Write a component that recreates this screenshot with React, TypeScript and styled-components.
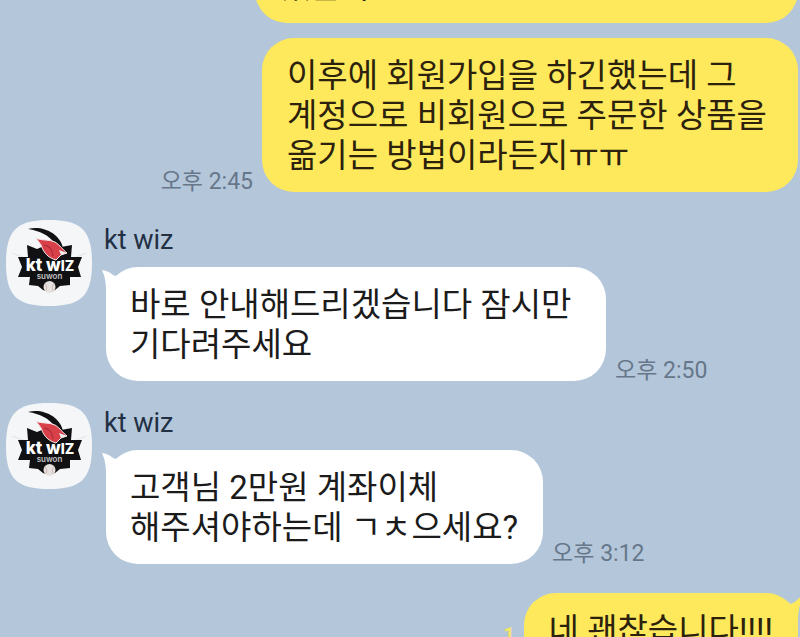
import React from "react";
import styled, { createGlobalStyle } from "styled-components";

const GlobalStyle = createGlobalStyle`
  * { box-sizing: border-box; }
  body { margin: 0; background: #b4c6da; overflow: hidden; }
`;

const Chat = styled.main`
  height: 100vh;
  overflow: hidden;
  background: #b4c6da;
  font-family: Roboto, "Noto Sans CJK KR", sans-serif;
`;

const History = styled.div`
  display: flex;
  flex-direction: column;
  margin-top: -51px;
`;

const Row = styled.div<{ $mine?: boolean; $gap?: number }>`
  display: flex;
  justify-content: ${(p) => (p.$mine ? "flex-end" : "flex-start")};
  align-items: ${(p) => (p.$mine ? "flex-end" : "flex-start")};
  margin-top: ${(p) => p.$gap ?? 0}px;
  padding: ${(p) => (p.$mine ? "0 2px 0 0" : "0 0 0 6px")};
`;

const Bubble = styled.p<{ $mine?: boolean; $wide?: boolean }>`
  position: relative;
  margin: 0;
  padding: 18px 25px 16px ${(p) => (p.$mine ? 25 : 24)}px;
  max-width: ${(p) => (p.$mine ? (p.$wide ? 543 : 536) : 500)}px;
  ${(p) => (p.$wide ? "width: 100%;" : "")}
  border-radius: 32px;
  background: ${(p) => (p.$mine ? "#fde95b" : "#ffffff")};
  color: ${(p) => (p.$mine ? "#2b210c" : "#1b1b1b")};
  font-size: 33px;
  line-height: 40px;
  white-space: pre-line;
  word-break: keep-all;
`;

const Tail = styled.svg<{ $mine?: boolean }>`
  position: absolute;
  top: 0;
  ${(p) => (p.$mine ? "right: -7px;" : "left: -5px;")}
  fill: ${(p) => (p.$mine ? "#fde95b" : "#ffffff")};
`;

const Time = styled.time`
  flex: none;
  margin: 0 9px;
  color: #66778a;
  font-size: 23px;
  line-height: 20px;
`;

const Unread = styled.span`
  align-self: flex-start;
  margin: 30px 9px 0 0;
  color: #f5e36a;
  font-size: 20px;
  font-weight: 700;
  line-height: 24px;
`;

const Avatar = styled.svg`
  flex: none;
  width: 86px;
  height: 86px;
`;

const Body = styled.div`
  margin-left: 12px;
`;

const Name = styled.div`
  height: 47px;
  padding-top: 4px;
  color: #223044;
  font-size: 27px;
  line-height: 32px;
`;

const BubbleLine = styled.div`
  display: flex;
  align-items: flex-end;
  margin-left: 2px;
`;

function TeamAvatar() {
  return (
    <Avatar viewBox="0 0 86 86" role="img" aria-label="kt wiz">
      <path d="M43 0C75 0 86 10 86 43S75 86 43 86 0 76 0 43 11 0 43 0Z" fill="#f5f6f8" />
      <path d="M6 33 22 39M80 33 66 39" stroke="#dfe2e6" strokeWidth="1" />
      <path
        d="M21 25 31 29 38 26 55 27 66 25 65 37 76 37 72 47 75 57 64 57 64 65 54 66 49 70 43 72 37 70 32 66 23 65 24 57 12 57 16 47 12 37 22 37Z"
        fill="#111113"
      />
      <path d="M22 9C36 5 54 13 57 28L49 24C43 15 34 11 22 9Z" fill="#111113" />
      <path
        d="M30 18C35 21 43 19 49 22 55 26 56 29 61 33L55 35 50 40C43 38 38 34 35 25Z"
        fill="#d8404a"
        stroke="#f7e9ea"
        strokeWidth="1"
      />
      <path d="M38 25Q46 26 47 36" fill="none" stroke="#a92a38" strokeWidth="1.2" />
      <path d="M53 30 61 33 55 35Z" fill="#f2f0ef" />
      <text x="44" y="51" textAnchor="middle" fontFamily="Inter, sans-serif" fontWeight="800" fontSize="17" fill="#ffffff">
        kt w
        <tspan fontSize="14">IZ</tspan>
      </text>
      <text x="43.5" y="59" textAnchor="middle" fontFamily="Inter, sans-serif" fontWeight="600" fontSize="8" fill="#c4c4c6">
        suwon
      </text>
      <circle cx="43.5" cy="67" r="6" fill="#e6e1df" />
      <path d="M39 63Q42 67 40 71M48 63Q45 67 47 71" fill="none" stroke="#cdbbb7" />
    </Avatar>
  );
}

function BubbleTail({ mine }: { mine?: boolean }) {
  return (
    <Tail $mine={mine} width="32" height="32" viewBox="0 0 32 32" aria-hidden="true">
      {mine ? (
        <path d="M31 3Q26 4 22 9L10 14V30H25Q25 11 31 3Z" />
      ) : (
        <path d="M1 3Q8 4 12 8L24 12V32H5Q6 13 1 3Z" />
      )}
    </Tail>
  );
}

function Incoming({ text, time, gap }: { text: string; time: string; gap: number }) {
  return (
    <Row $gap={gap}>
      <TeamAvatar />
      <Body>
        <Name>kt wiz</Name>
        <BubbleLine>
          <Bubble>
            <BubbleTail />
            {text}
          </Bubble>
          <Time>{time}</Time>
        </BubbleLine>
      </Body>
    </Row>
  );
}

export default function App() {
  return (
    <Chat>
      <GlobalStyle />
      <History>
        <Row $mine>
          <Bubble $mine $wide>있는 주</Bubble>
        </Row>
        <Row $mine $gap={15}>
          <Time>오후 2:45</Time>
          <Bubble $mine>이후에 회원가입을 하긴했는데 그 계정으로 비회원으로 주문한 상품을 옮기는 방법이라든지ㅠㅠ</Bubble>
        </Row>
        <Incoming gap={28} time="오후 2:50" text="바로 안내해드리겠습니다 잠시만 기다려주세요" />
        <Incoming gap={22} time="오후 3:12" text={"고객님 2만원 계좌이체\n해주셔야하는데 ㄱㅊ으세요?"} />
        <Row $mine $gap={29}>
          <Unread>1</Unread>
          <Bubble $mine>
            <BubbleTail mine />
            네 괜찮습니다!!!!
          </Bubble>
        </Row>
      </History>
    </Chat>
  );
}
